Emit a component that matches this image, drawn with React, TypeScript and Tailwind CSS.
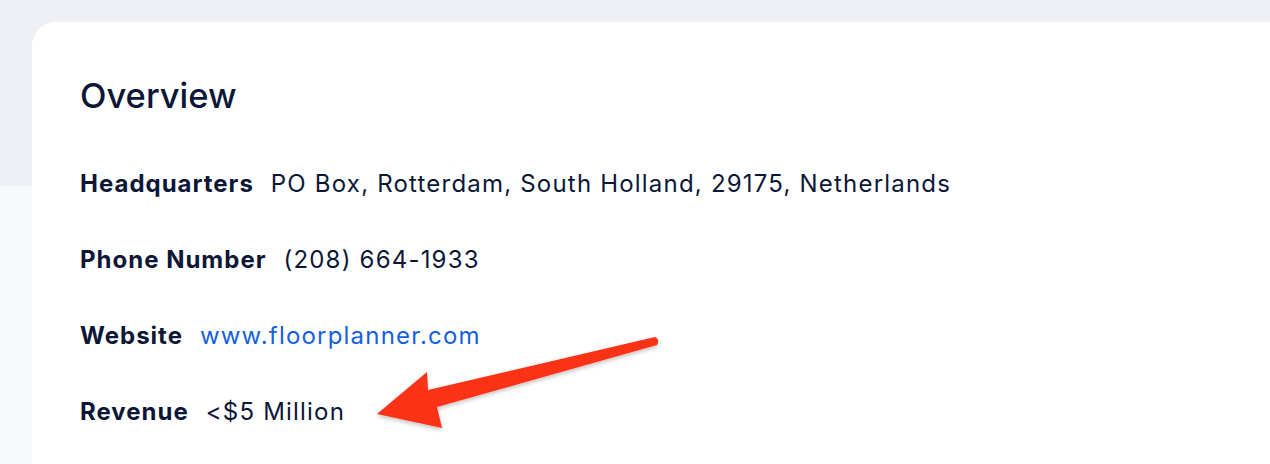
import React from "react";

const rows: { label: string; value: string; link?: boolean }[] = [
  { label: "Headquarters", value: "PO Box, Rotterdam, South Holland, 29175, Netherlands" },
  { label: "Phone Number", value: "(208) 664-1933" },
  { label: "Website", value: "www.floorplanner.com", link: true },
  { label: "Revenue", value: "<$5 Million" },
];

export default function App() {
  return (
    <div
      className="relative h-[464px] w-[1270px] overflow-hidden bg-[#f7f8fb] text-[#0c1738]"
      style={{ fontFamily: "Inter, 'Noto Sans', sans-serif" }}
    >
      {/* page background band */}
      <div className="absolute inset-x-0 top-0 h-[186px] bg-[#eef0f6] pointer-events-none" />

      <div className="relative pl-[32px] pt-[22px]">
        <div className="h-[460px] rounded-tl-[24px] bg-white pl-[48px] pt-[54px]">
          <h2 className="text-[34.5px] font-medium leading-[40px]">Overview</h2>
          <div className="mt-[52px] flex flex-col gap-[44px]">
            {rows.map((r) => (
              <div
                key={r.label}
                className="flex items-center gap-[17px] text-[24px] leading-[32px] tracking-[1.2px]"
              >
                <span className="font-bold tracking-[1px]">{r.label}</span>
                {r.link ? (
                  <a href="#" className="text-[#1560e0]">
                    {r.value}
                  </a>
                ) : (
                  <span>{r.value}</span>
                )}
              </div>
            ))}
          </div>
        </div>
      </div>

      {/* annotation arrow */}
      <svg
        className="absolute left-0 top-0 pointer-events-none"
        width="1270"
        height="464"
        viewBox="0 0 1270 464"
      >
        <defs>
          <filter id="sh" x="-10%" y="-30%" width="120%" height="160%">
            <feDropShadow dx="0" dy="2" stdDeviation="2" floodColor="#000" floodOpacity="0.25" />
          </filter>
        </defs>
        <path
          d="M655 337 Q660 339 657 345 L437 407 L442 428 L377 414 L427 372 L428 390 Z"
          fill="#fc3218"
          filter="url(#sh)"
          strokeLinejoin="round"
        />
      </svg>
    </div>
  );
}
